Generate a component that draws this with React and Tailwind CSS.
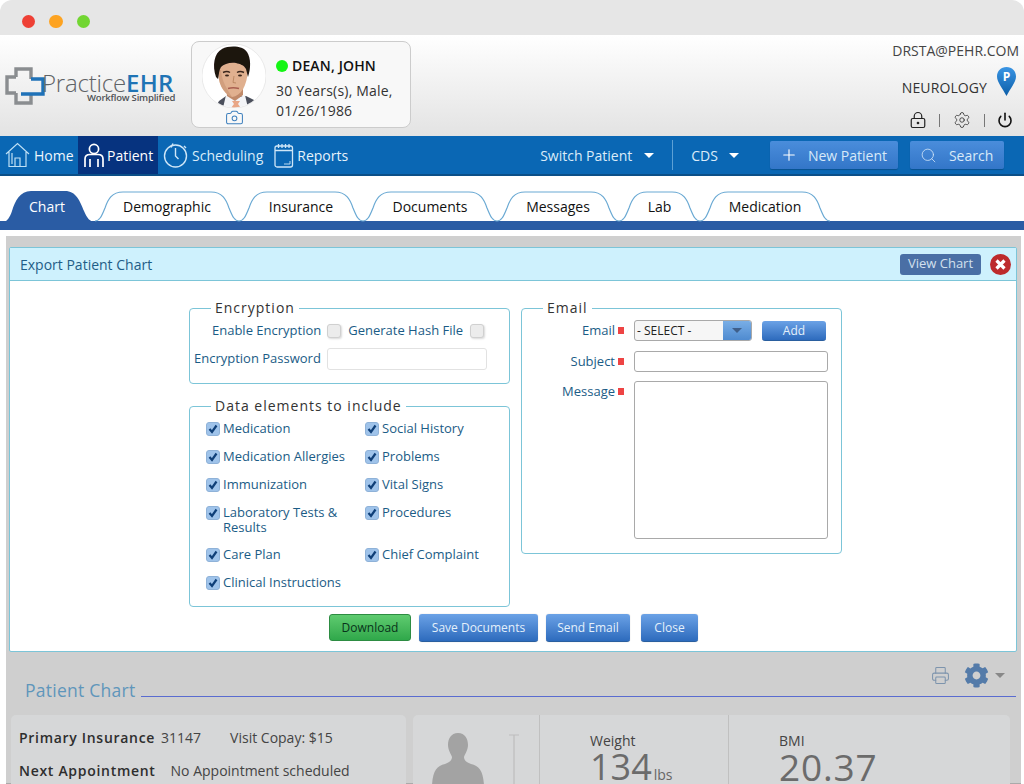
import React from "react";
import { Camera, LockKeyhole, Settings, Power, Plus, Search, Printer } from "lucide-react";
import { FaCog } from "react-icons/fa";

function Logo() {
  return (
    <div className="relative w-[186px] h-[44px] ml-[3px] mt-[31px] shrink-0">
      <svg width="42" height="40" viewBox="0 0 42 40" className="absolute left-[1px] top-0" fill="none">
        <path d="M12 11V3H27V13M12 27H3V11H12M12 27V37H27V28" stroke="#8a8d90" strokeWidth="3.4" />
        <path d="M17 28H39V13H27" stroke="#1f72b8" strokeWidth="3.4" />
      </svg>
      <div className="absolute left-[39px] top-[4px] text-[24px] leading-[26px] tracking-[-0.2px] font-light text-[#5f6366] whitespace-nowrap">
        Practice<span className="font-semibold text-[#1f74b5] tracking-[0.3px]">EHR</span>
      </div>
      <div className="absolute left-[84px] top-[26px] text-[9.5px] leading-[12px] font-semibold text-[#4f5256] whitespace-nowrap tracking-[-0.2px]">Workflow Simplified</div>
    </div>
  );
}

function Portrait() {
  return (
    <svg width="64" height="64" viewBox="0 0 64 64" className="block">
      <defs>
        <clipPath id="pc"><circle cx="32" cy="32" r="31.5" /></clipPath>
        <filter id="soft"><feGaussianBlur stdDeviation="0.4" /></filter>
      </defs>
      <circle cx="32" cy="32" r="32" fill="#ffffff" stroke="#dddddd" strokeWidth="0.6" />
      <g clipPath="url(#pc)" filter="url(#soft)">
        <path d="M13 64L17 57L24 52H44L52 56L54 64Z" fill="#4b505c" />
        <path d="M21 64L24 51L33 55L43 51L46 64Z" fill="#f3f4f7" />
        <path d="M30 57L38 57L36 60L39 64H29L32 60Z" fill="#e9a686" />
        <path d="M24 42L25 52L33 57L41 51L41 40Z" fill="#c08a6a" />
        <path d="M16 26C16 38 20 49 30 53C39 52 45 42 46 26C42 16 22 15 16 26Z" fill="#e0b08f" />
        <path d="M16 26C16 38 20 49 30 53C25 45 20 38 19 26Z" fill="#c79272" opacity="0.6" />
        <path d="M21 28.5Q25 26.5 28 28.5M35 28.5Q38 26.5 42 28.5" stroke="#3a281e" strokeWidth="1.4" fill="none" />
        <ellipse cx="25" cy="31.5" rx="2" ry="1" fill="#3a281e" />
        <ellipse cx="38" cy="31.5" rx="2" ry="1" fill="#3a281e" />
        <path d="M26 44.5Q31 43 37 44.5" stroke="#a95f50" strokeWidth="1.6" fill="none" />
        <path d="M32 32L31 38.5L34 39" stroke="#b8845f" strokeWidth="0.9" fill="none" />
        <path d="M14 33C10 22 12 9 20 5C28 1 41 2 45 8C49 14 49 24 46 33L44 25C42 21 38 20 34 19C28 18 22 20 19 23C17 26 17 30 16 35Z" fill="#1c1310" />
      </g>
    </svg>
  );
}

function HomeIcon() {
  return (
    <svg width="26" height="26" viewBox="0 0 26 26" fill="none" stroke="#bfe0f5" strokeWidth="1.2">
      <path d="M1 12L12.5 1.5L24 12M4 10V24.5H21V10" />
      <path d="M10 24.5V16H15V24.5M7 22V11" />
    </svg>
  );
}
function PatientIcon() {
  return (
    <svg width="20" height="25" viewBox="0 0 20 25" fill="none" stroke="#ffffff" strokeWidth="1.7">
      <circle cx="10" cy="6" r="4.6" />
      <path d="M1 24V16C1 13 3 11.5 6 11.5H14C17 11.5 19 13 19 16V24M6 24V16M14 24V16" />
    </svg>
  );
}
function ClockIcon() {
  return (
    <svg width="25" height="26" viewBox="0 0 25 26" fill="none" stroke="#cfe6f7" strokeWidth="1.4">
      <circle cx="12.5" cy="14" r="11" />
      <path d="M12.5 6V14L15.5 17M8 5.5L10 1.5M21 4L23 6" />
    </svg>
  );
}
function CalIcon() {
  return (
    <svg width="20" height="25" viewBox="0 0 20 25" fill="none" stroke="#cfe6f7" strokeWidth="1.3">
      <rect x="1" y="3" width="17.5" height="21" rx="2" />
      <path d="M1 7.5H18.5M4.5 1V5M8 1V5M11.5 1V5M15 1V5" />
      <path d="M10 21H16V18" strokeWidth="0.9" />
    </svg>
  );
}

function Caret({ cls }) {
  return <span className={`inline-block w-0 h-0 border-l-[5px] border-r-[5px] border-t-[5px] border-l-transparent border-r-transparent ${cls}`} />;
}

function Tab({ w, label, active }) {
  const d = active
    ? `M0 31 C4 31 7 26 9 20 C12 10 17 0 28 0 H${w - 30} C${w - 19} 0 ${w - 15} 10 ${w - 11} 20 C${w - 8} 27 ${w - 5} 31 ${w} 31 Z`
    : `M0 30 C5 30 7 24 10 17 C13 8 17 1 28 1 H${w - 28} C${w - 17} 1 ${w - 13} 8 ${w - 10} 17 C${w - 7} 24 ${w - 5} 30 ${w} 30`;
  return (
    <div className={`relative h-[31px] flex items-center justify-center shrink-0 ${active ? "pr-[4px]" : ""}`} style={{ width: w }}>
      <svg width={w} height="31" className="absolute left-0 top-0" fill="none">
        <path d={d} fill={active ? "#2a5ca4" : "#ffffff"} stroke={active ? "none" : "#6aa9d3"} strokeWidth="1.2" />
      </svg>
      <span className={`relative text-[14px] ${active ? "text-white" : "text-[#111]"}`}>{label}</span>
    </div>
  );
}

function Chk({ on }) {
  return on ? (
    <span className="w-[14px] h-[14px] rounded-[3px] bg-[#9fc3ea] border border-[#8fb2d8] flex items-center justify-center shrink-0">
      <svg width="10" height="10" viewBox="0 0 10 10" fill="none" stroke="#0f3f78" strokeWidth="2.2"><path d="M1.5 5L4 8L8.5 1.5" /></svg>
    </span>
  ) : (
    <span className="block w-[14px] h-[14px] rounded-[3px] bg-[#ececec] border border-[#d0d0d0] shadow-[1px_1px_2px_rgba(0,0,0,0.15)] shrink-0" />
  );
}

function Item({ children, cls = "" }) {
  return (
    <div className={`flex items-start gap-[3px] text-[13px] leading-[15px] text-[#1b5c86] ${cls}`}>
      <span className="mt-[1px]"><Chk on /></span>
      <span>{children}</span>
    </div>
  );
}

function Req({ children }) {
  return (
    <div className="w-[102px] flex items-center justify-end gap-[3px] text-[13px] text-[#1b5c86]">
      {children}
      <span className="w-[6px] h-[7px] bg-[#ee4444]" />
    </div>
  );
}

function Btn({ children }) {
  return (
    <button className="h-[28px] rounded-[3px] bg-gradient-to-b from-[#6ba2e6] to-[#2d6bbd] border-b border-[#2a5f9f] text-[12px] text-[#e4f0fb] shadow-[0_0_1px_rgba(0,0,0,0.3)]" >
      {children}
    </button>
  );
}

export default function App() {
  return (
    <div className="w-[1024px] h-[784px] overflow-hidden flex flex-col bg-white font-['Open_Sans',sans-serif]">
      <div className="h-[35px] shrink-0 bg-[#e6e6e6] rounded-t-[12px] flex items-center gap-[14px] pl-[22px] pt-[7px]">
        <span className="w-[13px] h-[13px] rounded-full bg-[#ee4035]" />
        <span className="w-[14px] h-[13px] rounded-full bg-[#fda321]" />
        <span className="w-[13px] h-[13px] rounded-full bg-[#72d632]" />
      </div>

      <div className="h-[101px] shrink-0 bg-gradient-to-b from-white to-[#e3e3e3] flex">
        <Logo />
        <div className="ml-[2px] mt-[6px] w-[220px] h-[87px] rounded-[8px] border border-[#cccccc] bg-[#f8f8f8] flex shrink-0">
          <div className="ml-[10px] mt-[2px] flex flex-col items-center">
            <Portrait />
            <Camera size={19} strokeWidth={1.3} className="text-[#3f80bd]" />
          </div>
          <div className="ml-[10px] mt-[14px] text-[14px] leading-[20px] text-[#333]">
            <div className="flex items-center gap-[4px] font-semibold text-[#111] tracking-[0.15px]">
              <span className="w-[12px] h-[12px] rounded-full bg-[#14f514]" />
              DEAN, JOHN
            </div>
            <div className="mt-[5px] tracking-[0.2px]">30 Years(s), Male,</div>
            <div className="tracking-[0.2px]">01/26/1986</div>
          </div>
        </div>
        <div className="ml-auto w-[145px] pr-[5px] flex flex-col items-end text-[#333]">
          <div className="mt-[6px] text-[14px] leading-[19px] text-[#444]">DRSTA@PEHR.COM</div>
          <div className="mt-[7px] flex items-start pr-[3px]">
            <span className="mt-[11px] text-[14px] leading-[19px] mr-[10px] tracking-[0.1px]">NEUROLOGY</span>
            <svg width="19" height="29" viewBox="0 0 19 29">
              <defs>
                <linearGradient id="pin" x1="0" y1="0" x2="0" y2="1">
                  <stop offset="0" stopColor="#3a95e4" />
                  <stop offset="1" stopColor="#0c5ea8" />
                </linearGradient>
              </defs>
              <path d="M9.5 0C4 0 0 4 0 9.5C0 15 6 22 9.5 29C13 22 19 15 19 9.5C19 4 15 0 9.5 0Z" fill="url(#pin)" />
              <text x="9.5" y="14" textAnchor="middle" fontSize="12" fontWeight="700" fill="#fff">P</text>
            </svg>
          </div>
          <div className="mt-[14px] mr-[6px] flex items-center text-[#222]">
            <LockKeyhole size={18} strokeWidth={1.6} />
            <span className="w-px h-[13px] bg-[#777] ml-[12px] mr-[13px]" />
            <Settings size={18} strokeWidth={1} />
            <span className="w-px h-[13px] bg-[#777] ml-[13px] mr-[12px]" />
            <Power size={16} strokeWidth={2.4} className="text-[#111]" />
          </div>
        </div>
      </div>

      <div className="h-[40px] shrink-0 bg-[#0a67b4] border-b-2 border-[#0b4f88] flex items-center text-white text-[14px]">
        <div className="w-[78px] h-full flex items-center pl-[5px] gap-[3px] text-[#eef6fc]"><HomeIcon />Home</div>
        <div className="w-[80px] h-full flex items-center pl-[6px] gap-[3px] bg-[#06337f]"><PatientIcon />Patient</div>
        <div className="ml-[5px] flex items-center gap-[4px] text-[#d9ecf9]"><ClockIcon />Scheduling</div>
        <div className="ml-[11px] flex items-center gap-[3px] text-[#e6f2fb]"><CalIcon />Reports</div>
        <div className="ml-[192px] flex items-center gap-[12px] text-[14px] text-[#dbecf9]">Switch Patient<Caret cls="border-t-white" /></div>
        <span className="w-px h-[30px] bg-[#5da0d5] ml-[18px]" />
        <div className="ml-[18px] flex items-center gap-[11px] text-[14px] text-[#dbecf9]">CDS<Caret cls="border-t-white" /></div>
        <button className="ml-[31px] w-[128px] h-[28px] rounded-[2px] bg-gradient-to-b from-[#4a8ddb] to-[#3376c8] flex items-center pl-[10px] gap-[10px] text-[14px] text-[#d8e9f8] shadow-[0_1px_1px_rgba(0,0,0,0.2)]">
          <Plus size={18} strokeWidth={1.5} className="text-white" />New Patient
        </button>
        <button className="ml-[12px] w-[94px] h-[28px] rounded-[2px] bg-gradient-to-b from-[#4a8ddb] to-[#3376c8] flex items-center pl-[10px] gap-[12px] text-[14px] text-[#d8e9f8] shadow-[0_1px_1px_rgba(0,0,0,0.2)]">
          <Search size={17} strokeWidth={1.1} className="text-[#d8e9f8]" />Search
        </button>
      </div>

      <div className="h-[45px] shrink-0 bg-white pl-[3px] pt-[15px] flex items-start">
        <Tab w={92} label="Chart" active />
        <Tab w={144} label="Demographic" />
        <Tab w={124} label="Insurance" />
        <Tab w={134} label="Documents" />
        <Tab w={122} label="Messages" />
        <Tab w={81} label="Lab" />
        <Tab w={130} label="Medication" />
      </div>
      <div className="h-[9px] shrink-0 bg-[#2a5ca4]" />

      <div className="flex-1 min-h-0 pt-[6px] pl-[6px] pr-[3px]">
        <div className="h-full bg-[#cfcfcf] pt-[11px] pl-[3px] border-b border-[#aaa]">
          <div className="w-[1008px] h-[405px] border border-[#7cc5d8] rounded-[2px] bg-white flex flex-col">
            <div className="h-[33px] shrink-0 bg-[#cef1fd] border-b border-[#7cc5d8] flex items-center pl-[10px] pr-[5px] text-[14px] text-[#1f5d87]">
              Export Patient Chart
              <button className="ml-auto w-[81px] h-[21px] rounded-[3px] bg-[#4a6fa5] text-[13px] text-[#d3e0ee]">View Chart</button>
              <svg width="21" height="21" viewBox="0 0 21 21" className="ml-[9px]">
                <circle cx="10.5" cy="10.5" r="10.5" fill="#bd2a2c" />
                <path d="M6.5 6.5L14.5 14.5M14.5 6.5L6.5 14.5" stroke="#fff" strokeWidth="3.2" />
              </svg>
            </div>

            <div className="flex pl-[179px] gap-[11px]">
              <div className="w-[321px] shrink-0">
                <fieldset className="mt-[18px] h-[85px] border border-[#7cc5d8] rounded-[4px]">
                  <legend className="ml-[21px] px-[4px] text-[14px] leading-[18px] tracking-[1px] text-[#333]">Encryption</legend>
                  <div className="flex items-center h-[20px] mt-[4px] pl-[4px] text-[13px] text-[#1b5c86]">
                    <span className="ml-[18px]">Enable Encryption</span>
                    <span className="ml-[6px]"><Chk /></span>
                    <span className="ml-[7px]">Generate Hash File</span>
                    <span className="ml-[7px]"><Chk /></span>
                  </div>
                  <div className="flex items-center mt-[7px] pl-[4px] text-[13px] text-[#1b5c86]">
                    <span>Encryption Password</span>
                    <span className="ml-[6px] w-[160px] h-[22px] rounded-[3px] border border-[#e2e2e2] bg-white" />
                  </div>
                </fieldset>
                <fieldset className="mt-[13px] h-[210px] border border-[#7cc5d8] rounded-[4px]">
                  <legend className="ml-[21px] px-[4px] text-[14px] leading-[18px] tracking-[1px] text-[#333]">Data elements to include</legend>
                  <div className="grid grid-cols-[159px_1fr] pl-[16px] pr-[20px] mt-[6px] gap-y-[13px]">
                    <Item>Medication</Item>
                    <Item>Social History</Item>
                    <Item>Medication Allergies</Item>
                    <Item>Problems</Item>
                    <Item>Immunization</Item>
                    <Item>Vital Signs</Item>
                    <Item cls="mb-[-1px]">Laboratory Tests &amp;<br />Results</Item>
                    <Item>Procedures</Item>
                    <Item>Care Plan</Item>
                    <Item>Chief Complaint</Item>
                    <Item>Clinical Instructions</Item>
                  </div>
                </fieldset>
              </div>
              <fieldset className="mt-[18px] w-[321px] h-[255px] border border-[#7cc5d8] rounded-[4px] shrink-0">
                <legend className="ml-[21px] px-[4px] text-[14px] leading-[18px] tracking-[1px] text-[#333]">Email</legend>
                <div className="flex items-start mt-[3px]">
                  <div className="mt-[1px]"><Req>Email</Req></div>
                  <div className="ml-[10px] w-[118px] h-[21px] rounded-[3px] border border-[#a9a9a9] bg-[#f6f6f6] flex items-center text-[12px] text-[#222] overflow-hidden">
                    <span className="pl-[2px]">- SELECT -</span>
                    <span className="ml-auto w-[28px] h-full bg-gradient-to-b from-[#79aee6] to-[#4f8bd0] flex items-center justify-center"><Caret cls="border-t-[#3f5f8a]" /></span>
                  </div>
                  <button className="ml-[10px] w-[64px] h-[20px] mt-[1px] rounded-[3px] bg-gradient-to-b from-[#6ba2e6] to-[#2d6bbd] border-b border-[#2a5f9f] text-[12px] text-[#e4f0fb]">Add</button>
                </div>
                <div className="flex items-center mt-[10px]">
                  <Req>Subject</Req>
                  <span className="ml-[10px] w-[194px] h-[21px] rounded-[3px] border border-[#a9a9a9] bg-white" />
                </div>
                <div className="flex items-start mt-[9px]">
                  <div className="mt-[1px]"><Req>Message</Req></div>
                  <span className="ml-[10px] w-[194px] h-[158px] rounded-[3px] border border-[#a9a9a9] bg-white" />
                </div>
              </fieldset>
            </div>

            <div className="flex pl-[319px] mt-[7px]">
              <button className="w-[82px] h-[27px] rounded-[3px] bg-gradient-to-b from-[#5ecb70] to-[#2fa84a] border border-[#2d8c42] text-[12px] text-[#08331a]">Download</button>
              <div className="ml-[8px] w-[119px] grid"><Btn>Save Documents</Btn></div>
              <div className="ml-[8px] w-[84px] grid"><Btn>Send Email</Btn></div>
              <div className="ml-[11px] w-[57px] grid"><Btn>Close</Btn></div>
            </div>
          </div>

          <div className="w-[1007px] relative h-[45px] flex items-end pl-[16px]">
            <span className="text-[17.5px] leading-[24px] text-[#5f96bb] mb-[-5px] tracking-[0.25px]">Patient Chart</span>
            <span className="flex-1 ml-[6px] h-px bg-[#5a6cd0]" />
            <div className="absolute right-[11px] top-[11px] flex items-center text-[#7d94ad]">
              <Printer size={19} strokeWidth={1.3} />
              <FaCog size={25} className="ml-[14px] text-[#547ba9]" />
              <Caret cls="ml-[6px] border-t-[#888]" />
            </div>
          </div>

          <div className="flex mt-[18px] h-[70px] overflow-hidden text-[#333]">
            <div className="w-[395px] ml-[2px] rounded-t-[5px] bg-[#d6d7d8] pl-[8px] pt-[13px] text-[14px] leading-[20px]">
              <div className="flex">
                <span className="font-semibold tracking-[0.7px] text-[#2e2e2e]">Primary Insurance</span>
                <span className="ml-[6px] text-[#444]">31147</span>
                <span className="ml-[29px] text-[#444]">Visit Copay: $15</span>
              </div>
              <div className="flex mt-[13px]">
                <span className="font-semibold tracking-[0.7px] text-[#2e2e2e]">Next Appointment</span>
                <span className="ml-[15px] text-[#444]">No Appointment scheduled</span>
              </div>
            </div>
            <div className="w-[597px] ml-[7px] rounded-t-[5px] bg-[#d6d7d8] flex">
              <div className="w-[127px] border-r border-[#c0c0c0] relative">
                <svg width="54" height="52" viewBox="0 0 54 52" className="absolute left-[18px] top-[18px]">
                  <path d="M27 0C20 0 17 6 17 12C17 17 20 21 21 24C21 27 19 29 14 31C6 33 2 37 1 52H53C52 37 48 33 40 31C35 29 33 27 33 24C34 21 37 17 37 12C37 6 34 0 27 0Z" fill="#a3a3a3" />
                </svg>
                <svg width="12" height="52" viewBox="0 0 12 52" className="absolute left-[95px] top-[19px]">
                  <path d="M1 1H11M6 1V52" stroke="#bdbdbd" strokeWidth="1.2" fill="none" />
                </svg>
              </div>
              <div className="w-[189px] border-r border-[#c0c0c0] pl-[50px] pt-[17px]">
                <div className="text-[14px] leading-[18px] text-[#444]">Weight</div>
                <div className="text-[36px] leading-[34px] text-[#6b6b6b] flex items-baseline">134<span className="text-[14px] leading-none text-[#666] ml-[2px]">lbs</span></div>
              </div>
              <div className="pl-[50px] pt-[17px]">
                <div className="text-[14px] leading-[18px] text-[#444]">BMI</div>
                <div className="text-[37px] leading-[34px] text-[#6b6b6b] tracking-[0.8px]">20.37</div>
              </div>
            </div>
          </div>
        </div>
      </div>
    </div>
  );
}
